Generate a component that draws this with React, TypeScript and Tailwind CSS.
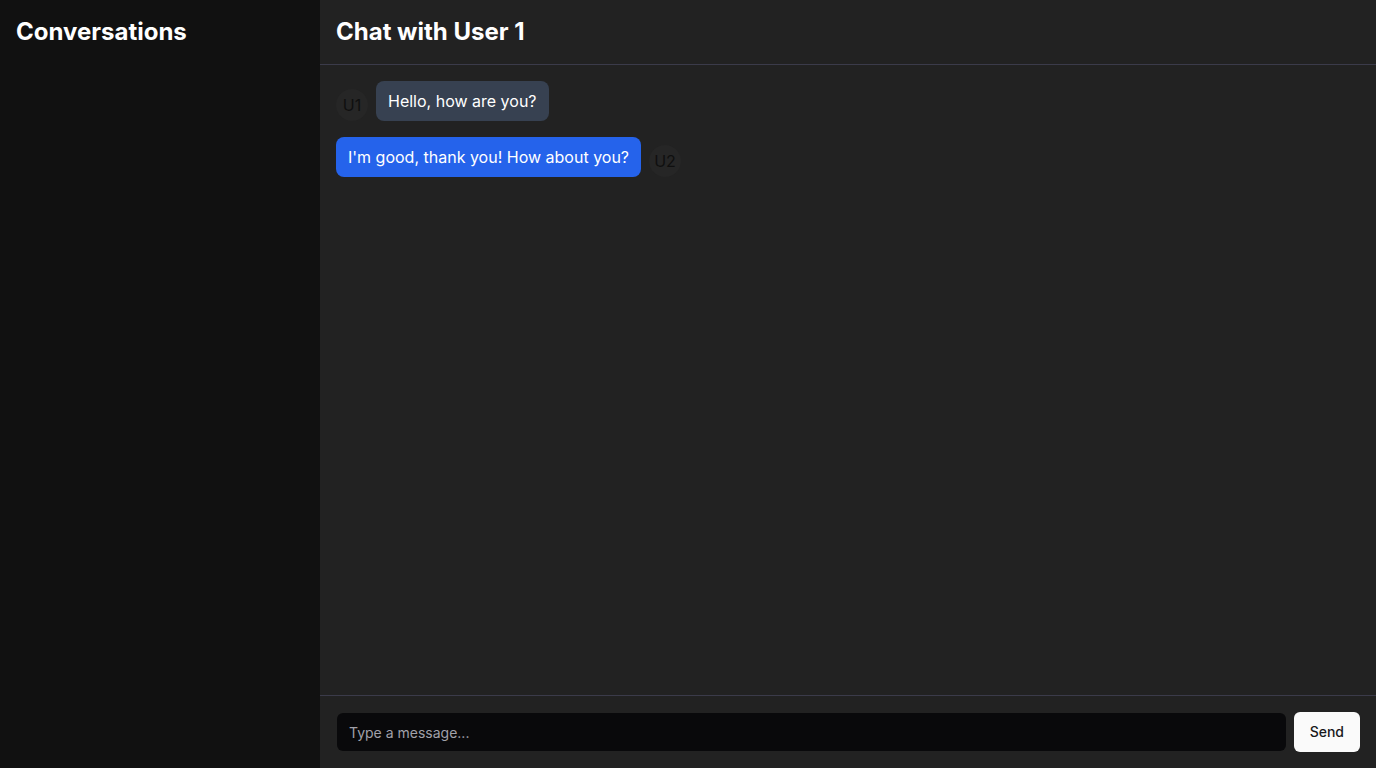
interface Message {
  id: number;
  author: string;
  text: string;
  mine: boolean;
}

const messages: Message[] = [
  { id: 1, author: "U1", text: "Hello, how are you?", mine: false },
  { id: 2, author: "U2", text: "I'm good, thank you! How about you?", mine: true },
];

const Avatar: React.FC<{ label: string }> = ({ label }) => (
  <div className="w-8 h-8 shrink-0 rounded-full bg-[#262626] flex items-center justify-center text-[#0f0f0f] text-base">
    {label}
  </div>
);

const App: React.FC = () => {
  return (
    <div
      className="flex h-screen w-full text-white"
      style={{ fontFamily: "Inter, 'Noto Sans', sans-serif" }}
    >
      <aside className="w-[320px] shrink-0 bg-[#111111] p-4">
        <h2 className="text-2xl font-bold leading-8">Conversations</h2>
      </aside>

      <main className="flex-1 flex flex-col bg-[#222222]">
        <header className="h-[65px] px-4 pt-4 border-b border-[#3b3b4a]">
          <h1 className="text-2xl font-bold leading-8">Chat with User 1</h1>
        </header>

        <div className="flex-1 p-4 flex flex-col gap-4 overflow-y-auto">
          {messages.map((m) =>
            m.mine ? (
              <div key={m.id} className="flex items-end gap-2">
                <div className="bg-[#2563eb] text-white rounded-lg px-3 py-2 text-base leading-6">
                  {m.text}
                </div>
                <Avatar label={m.author} />
              </div>
            ) : (
              <div key={m.id} className="flex items-end gap-2">
                <Avatar label={m.author} />
                <div className="bg-[#374151] text-white rounded-lg px-3 py-2 text-base leading-6">
                  {m.text}
                </div>
              </div>
            )
          )}
        </div>

        <footer className="border-t border-[#3b3b4a] p-4 flex items-center gap-2">
          <input
            type="text"
            placeholder="Type a message..."
            className="flex-1 h-[38px] ml-px rounded-md bg-[#09090b] px-3 text-sm text-white placeholder:text-[#a1a1aa] outline-none"
          />
          <button className="h-10 px-4 rounded-md bg-[#fafafa] text-[#18181b] text-sm font-medium">
            Send
          </button>
        </footer>
      </main>
    </div>
  );
};

export default App;
